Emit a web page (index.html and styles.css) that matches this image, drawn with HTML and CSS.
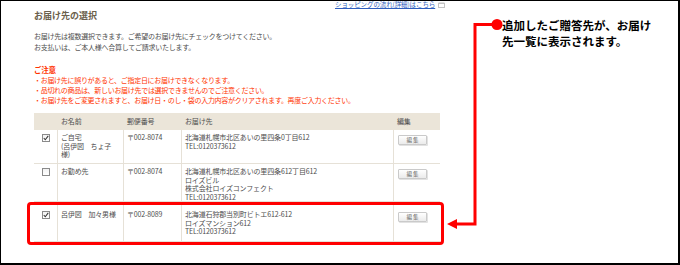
FILE: index.html
```html
<!DOCTYPE html>
<html lang="ja">
<head>
<meta charset="utf-8">
<title>お届け先の選択</title>
<link rel="stylesheet" href="styles.css">
</head>
<body>
<div class="frame">
  <div class="content">
    <div class="toplink">
      <a href="#">ショッピングの流れ(詳細)はこちら</a>
      <svg class="winicon" width="7" height="6" viewBox="0 0 7 6"><rect x="0.5" y="1.5" width="6" height="4" fill="#fff" stroke="#c4c4c4"/><rect x="0.5" y="0.5" width="6" height="1.5" fill="#c4c4c4"/></svg>
    </div>
    <h1 class="title">お届け先の選択</h1>
    <p class="lead">お届け先は複数選択できます。ご希望のお届け先にチェックをつけてください。<br>お支払いは、ご本人様へ合算してご請求いたします。</p>
    <div class="notice">
      <p class="notice-head">ご注意</p>
      <p>・お届け先に誤りがあると、ご指定日にお届けできなくなります。</p>
      <p>・品切れの商品は、新しいお届け先では選択できませんのでご注意ください。</p>
      <p>・お届け先をご変更されますと、お届け日・のし・袋の入力内容がクリアされます。再度ご入力ください。</p>
    </div>
    <div class="tbl">
      <div class="tr th">
        <div class="c c1"></div>
        <div class="c">お名前</div>
        <div class="c">郵便番号</div>
        <div class="c">お届け先</div>
        <div class="c">編集</div>
      </div>
      <div class="tr r1">
        <div class="c c1"><span class="cb on"><svg viewBox="0 0 8 8" width="6" height="6"><path d="M1 4 L3 6.3 L7 1.2" fill="none" stroke="#333" stroke-width="1.4"/></svg></span></div>
        <div class="c">ご自宅<br>(呂伊図　ちょ子<br>様)</div>
        <div class="c">〒002-8074</div>
        <div class="c">北海道札幌市北区あいの里四条0丁目612<br>TEL:0120373612</div>
        <div class="c"><span class="btn">編 集</span></div>
      </div>
      <div class="tr r2">
        <div class="c c1"><span class="cb"></span></div>
        <div class="c">お勤め先</div>
        <div class="c">〒002-8074</div>
        <div class="c">北海道札幌市北区あいの里四条612丁目612<br>ロイズビル<br>株式会社ロイズコンフェクト<br>TEL:0120373612</div>
        <div class="c"><span class="btn">編 集</span></div>
      </div>
      <div class="hl">
        <div class="tr r3">
          <div class="c c1"><span class="cb on"><svg viewBox="0 0 8 8" width="6" height="6"><path d="M1 4 L3 6.3 L7 1.2" fill="none" stroke="#333" stroke-width="1.4"/></svg></span></div>
          <div class="c nowrap">呂伊図　加々男様</div>
          <div class="c">〒002-8089</div>
          <div class="c">北海道石狩郡当別町ビトエ612-612<br>ロイズマンション612<br>TEL:0120373612</div>
          <div class="c"><span class="btn">編 集</span></div>
        </div>
      </div>
    </div>
  </div>
  <div class="callout">追加したご贈答先が、お届け<br>先一覧に表示されます。</div>
  <svg class="arrow" width="680" height="265" viewBox="0 0 680 265">
    <path d="M493 24.5 H475 V224 H455" fill="none" stroke="#ff0000" stroke-width="3"/>
    <polygon points="447,224 457,219 457,229" fill="#ff0000"/>
    <circle cx="497" cy="24.5" r="5.5" fill="#ff0000"/>
  </svg>
</div>
</body>
</html>
```
FILE: styles.css
```css
* { box-sizing: border-box; }
html, body { margin: 0; padding: 0; background: #fff; }
body {
  font-family: "Noto Sans CJK JP", "Noto Sans", sans-serif;
  color: #4d4d4d;
}
.frame {
  position: relative;
  width: 680px;
  height: 265px;
  border-top: 1px solid #000;
  border-left: 1px solid #000;
  border-right: 2px solid #000;
  border-bottom: 2px solid #000;
  background: #fff;
  overflow: hidden;
}
.content {
  padding-left: 33px;
  width: 460px;
}
.toplink {
  display: flex;
  align-items: center;
  height: 9px;
  padding-left: 301px;
  margin-top: -1px;
  line-height: 9px;
}
.toplink a {
  font-size: 6.5px;
  color: #2f5fc0;
  text-decoration: underline;
  letter-spacing: -0.1px;
}
.winicon { margin-left: 3px; }
.title {
  margin: 1px 0 0;
  font-size: 9px;
  line-height: 12px;
  font-weight: bold;
  color: #6b604c;
}
.lead {
  margin: 9px 0 0;
  font-size: 7px;
  line-height: 11px;
  letter-spacing: -0.25px;
  color: #4d4d4d;
}
.notice { margin-top: 11px; color: #ff3300; }
.notice p {
  margin: 0;
  font-size: 7px;
  line-height: 10px;
  letter-spacing: -0.3px;
}
.notice .notice-head {
  font-weight: bold;
  font-size: 7.5px;
  line-height: 11px;
}
.tbl { margin-top: 8px; width: 406px; }
.tr {
  display: grid;
  grid-template-columns: 23px 66px 58px 212px 47px;
  border-bottom: 1px solid #e6e1d7;
  font-size: 7px;
  line-height: 8.7px;
  color: #4d4d4d;
}
.tr .c {
  border-left: 1px solid #e6e1d7;
  padding: 3px 3px 0 3px;
  letter-spacing: -0.15px;
}
.tr .c1 {
  border-left: none;
  display: flex;
  justify-content: center;
  padding: 4px 0 0;
}
.th {
  background: #ebe5d9;
  height: 17px;
  border-bottom: none;
}
.th .c {
  border-left-color: transparent;
  padding-top: 0;
  line-height: 17px;
}
.r1 { height: 34px; }
.r2 { height: 38px; }
.r3 { height: 37px; }
.r3 .c { padding-top: 5px; }
.r3 .c1 { padding-top: 6px; }
.r3 .btn { margin-top: 2px; }
.nowrap { white-space: nowrap; }
.cb {
  display: flex;
  align-items: center;
  justify-content: center;
  width: 8px;
  height: 8px;
  border: 1px solid #8a8a8a;
  background: linear-gradient(#f2f2f2, #fff);
}
.btn {
  display: block;
  width: 29px;
  height: 10px;
  margin: 2px 0 0 1px;
  border: 1px solid #cacaca;
  border-radius: 1px;
  background: linear-gradient(#ffffff, #ebebeb);
  box-shadow: 1px 1px 0 #e2e2e2;
  font-size: 5.5px;
  line-height: 8px;
  text-align: center;
  color: #666;
  letter-spacing: 0;
}
.hl {
  margin-left: -7px;
  margin-right: -4px;
  padding: 0 1px 0 4px;
  border: 3px solid #ff0000;
  border-radius: 4px;
}
.callout {
  position: absolute;
  left: 501px;
  top: 16px;
  font-size: 11.5px;
  line-height: 16px;
  font-weight: bold;
  color: #000;
}
.arrow {
  position: absolute;
  left: -1px;
  top: -1px;
  pointer-events: none;
}
```
